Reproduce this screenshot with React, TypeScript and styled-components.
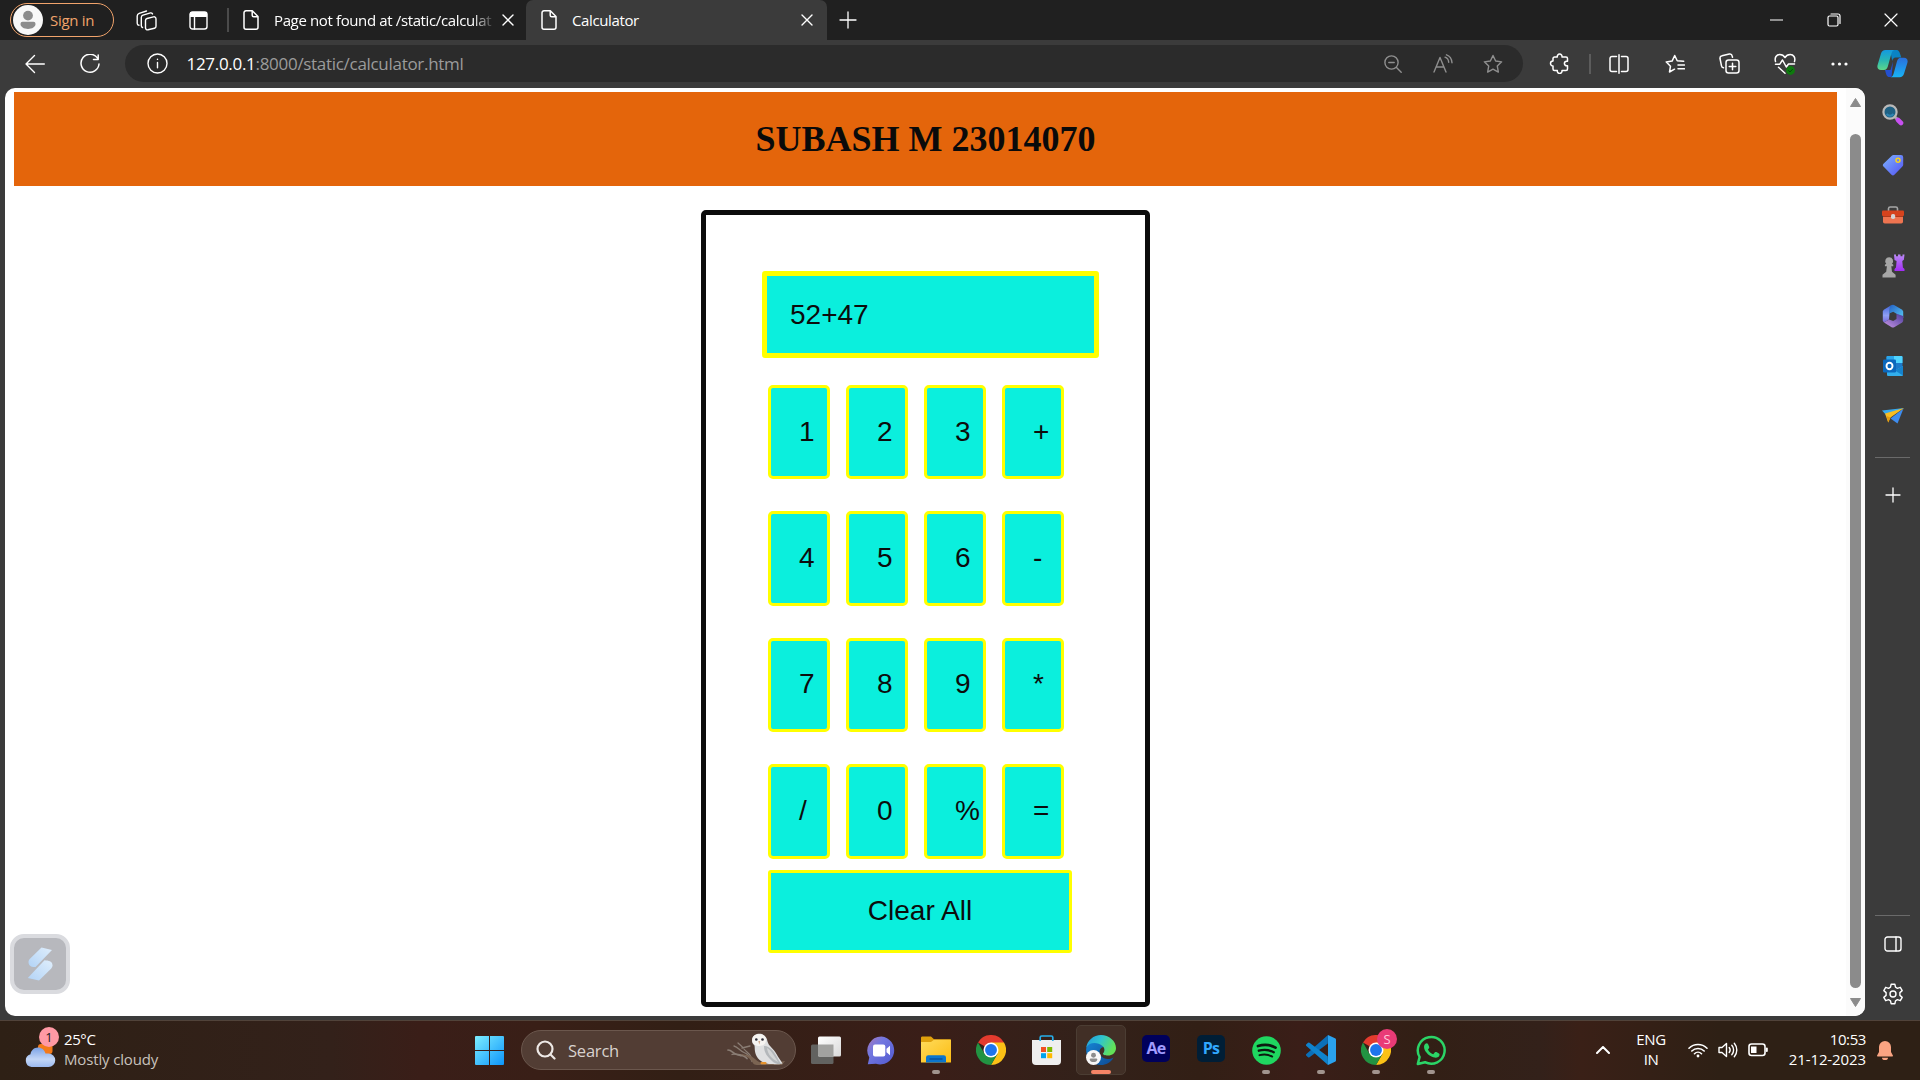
import React from 'react';
import styled, { createGlobalStyle } from 'styled-components';

const GlobalStyle = createGlobalStyle`
  * { box-sizing: border-box; }
  body { margin: 0; background: #3b3b3b; overflow: hidden; }
`;

const ui = `"Open Sans", "Noto Sans", sans-serif`;

const Desktop = styled.div`
  width: 1920px;
  height: 1080px;
  display: flex;
  flex-direction: column;
  background: #3b3b3b;
  font-family: ${ui};
  color: #fff;
`;

const Cell = styled.div<{ $w: number; $h?: number }>`
  width: ${p => p.$w}px;
  height: ${p => (p.$h ? `${p.$h}px` : '100%')};
  display: flex;
  flex: none;
  align-items: center;
  justify-content: center;
`;

const Label = styled.span<{ $size: number; $spacing?: number; $color?: string }>`
  font-size: ${p => p.$size}px;
  letter-spacing: ${p => p.$spacing ?? 0}px;
  color: ${p => p.$color ?? '#fff'};
  white-space: nowrap;
`;

/* ---------- Tab strip ---------- */

const TabStrip = styled.div`
  height: 40px;
  flex: none;
  display: flex;
  align-items: center;
  padding-left: 10px;
  background: #202020;
`;

const SignIn = styled.div`
  width: 104px;
  height: 34px;
  display: flex;
  align-items: center;
  gap: 7px;
  padding: 0 0 1px 2px;
  border: 1.5px solid #f0a36b;
  border-radius: 17px;
`;

const StripDivider = styled.div`
  width: 2px;
  height: 24px;
  margin: 0 14px 0 8px;
  background: #4b4b4b;
`;

const Tab = styled.div<{ $w: number; $active?: boolean }>`
  width: ${p => p.$w}px;
  height: 40px;
  display: flex;
  align-items: center;
  padding-left: ${p => (p.$active ? 15 : 0)}px;
  padding-right: ${p => (p.$active ? 14 : 12)}px;
  background: ${p => (p.$active ? '#3b3b3b' : 'transparent')};
  border-radius: 7px 7px 0 0;
`;

const TabTitle = styled.div<{ $fade?: boolean }>`
  flex: 1;
  min-width: 0;
  margin: 0 10px 1px 15px;
  line-height: 24px;
  font-size: 15px;
  letter-spacing: -0.37px;
  white-space: nowrap;
  ${p => p.$fade && 'mask-image: linear-gradient(90deg, #000 91%, rgba(0, 0, 0, 0.15) 100%);'}
`;

const WindowControls = styled.div`
  margin-left: auto;
  height: 40px;
  display: flex;
`;

/* ---------- Toolbar ---------- */

const Toolbar = styled.div`
  height: 48px;
  flex: none;
  display: flex;
  align-items: center;
  padding: 0 2px 1px 15px;
`;

const Omnibox = styled.div`
  width: 1398px;
  height: 37px;
  flex: none;
  display: flex;
  align-items: center;
  padding: 0 5.5px 0 22px;
  margin-right: 6px;
  background: #2b2b2b;
  border-radius: 19px;
`;

const Url = styled.div`
  flex: 1;
  margin-left: 18.5px;
  font-size: 17px;
  letter-spacing: -0.3px;
  line-height: 24px;
  color: #9b9b9b;
  b { font-weight: 400; color: #fff; }
`;

const ToolDivider = styled.div`
  width: 2px;
  height: 20px;
  background: #5c5c5c;
`;

/* ---------- Browser body ---------- */

const Body = styled.div`
  height: 932px;
  flex: none;
  display: flex;
  padding-left: 5px;
`;

const Page = styled.div`
  position: relative;
  width: 1860px;
  height: 928px;
  display: flex;
  background: #fff;
  border-radius: 10px;
  overflow: hidden;
`;

const PageContent = styled.main`
  width: 1841px;
  padding: 4px 9px 0;
`;

const Banner = styled.header`
  height: 94px;
  display: flex;
  align-items: center;
  justify-content: center;
  background: #e4650b;
  color: #0a0a0a;
  font-family: "Liberation Serif", serif;
  h1 { margin: 0; font-size: 36px; line-height: 40px; }
`;

const Scrollbar = styled.div`
  width: 19px;
  display: flex;
  flex-direction: column;
  align-items: center;
  padding: 10px 0 9px;
  background: #fbfbfb;
`;

const Thumb = styled.div`
  width: 11px;
  height: 854px;
  margin-top: 27px;
  margin-bottom: auto;
  border-radius: 6px;
  background: #8b8b8b;
`;

const Calculator = styled.section`
  width: 449px;
  height: 797px;
  margin: 24px auto 0;
  padding: 56px 0 0 56px;
  border: 5px solid #0c0c0c;
  border-radius: 5px;
  color: #0c0c0c;
  font-family: "Liberation Sans", sans-serif;
  font-size: 28px;
`;

const Display = styled.div`
  width: 337px;
  height: 87px;
  display: flex;
  align-items: center;
  padding-left: 23px;
  background: #0befdd;
  border: 5px solid #ffff00;
  border-radius: 3px;
`;

const Keys = styled.div`
  display: grid;
  grid-template-columns: repeat(4, 62px);
  grid-auto-rows: 94.4px;
  gap: 32px 16px;
  margin: 27px 0 11px 6px;
`;

const Key = styled.div`
  display: flex;
  align-items: center;
  padding: 0 0 1px 28px;
  background: #0befdd;
  border: 3px solid #ffff00;
  border-radius: 5px;
`;

const ClearKey = styled.div`
  width: 304px;
  height: 83px;
  display: flex;
  align-items: center;
  justify-content: center;
  margin-left: 6px;
  padding-bottom: 1px;
  background: #0befdd;
  border: 3px solid #ffff00;
  border-radius: 3px;
`;

const FloatingButton = styled.div`
  position: absolute;
  left: 5px;
  bottom: 22px;
  width: 60px;
  height: 60px;
  display: flex;
  align-items: center;
  justify-content: center;
  background: #b7b8bd;
  border: 4px solid #dadbdf;
  border-radius: 14px;
`;

const Sidebar = styled.aside`
  width: 55px;
  display: flex;
  flex-direction: column;
  align-items: center;
  padding: 2px 0 3px;
`;

const SideLine = styled.div`
  width: 35px;
  height: 1px;
  flex: none;
  background: #6a6a6a;
`;

const SideBottom = styled.div`
  margin-top: auto;
  display: flex;
  flex-direction: column;
  align-items: center;
`;

/* ---------- Taskbar ---------- */

const Taskbar = styled.footer`
  height: 60px;
  flex: none;
  display: flex;
  align-items: center;
  padding-bottom: 1px;
  border-top: 1px solid #51433a;
  background: linear-gradient(90deg, #2e2015 0, #33211a 330px, #3a1e18 420px, #391f17 540px, #321f15 680px, #3a1e18 930px, #33211a 1080px, #321f15 1200px, #3a1e18 1300px, #321f15 1420px, #33211a 1540px, #3a2017 1580px, #2e2015 1720px, #2e2015 100%);
`;

const Weather = styled.div`
  width: 462px;
  height: 100%;
  display: flex;
  align-items: center;
  padding-left: 24px;
  gap: 5px;
`;

const Lines = styled.div<{ $align?: string }>`
  display: flex;
  flex-direction: column;
  align-items: ${p => p.$align ?? 'flex-start'};
  padding-bottom: 2px;
  line-height: 20px;
`;

const WeatherIcon = styled.div`
  position: relative;
  width: 35px;
  height: 46px;
`;

const CloudSpot = styled.div`
  position: absolute;
  left: 0;
  bottom: 5px;
  display: flex;
`;

const Badge = styled.span<{ $x: number; $y: number; $bg: string; $fg: string }>`
  position: absolute;
  left: ${p => p.$x}px;
  top: ${p => p.$y}px;
  width: 20px;
  height: 20px;
  border-radius: 50%;
  text-align: center;
  font-size: 13px;
  line-height: 20px;
  background: ${p => p.$bg};
  color: ${p => p.$fg};
`;

const SearchBox = styled.div`
  width: 275px;
  height: 40px;
  flex: none;
  display: flex;
  align-items: center;
  margin: 0 2px 0 4px;
  padding: 0 8px 0 14px;
  background: #523d34;
  border: 1px solid #6b574d;
  border-radius: 20px;
  svg:last-child { margin-left: auto; }
`;

const TaskButton = styled.div<{ $active?: boolean }>`
  position: relative;
  width: 50px;
  height: 50px;
  flex: none;
  display: flex;
  align-items: center;
  justify-content: center;
  margin-right: 5px;
  border-radius: 5px;
  border: 1px solid ${p => (p.$active ? '#4b3d33' : 'transparent')};
  background: ${p => (p.$active ? '#412f26' : 'transparent')};
`;

const Running = styled.span<{ $active?: boolean }>`
  position: absolute;
  bottom: 0;
  left: ${p => (p.$active ? 14 : 20)}px;
  width: ${p => (p.$active ? 20 : 8)}px;
  height: 4px;
  border-radius: 2px;
  background: ${p => (p.$active ? '#f58466' : '#a1948e')};
`;

const AdobeTile = styled.div<{ $bg: string; $fg: string }>`
  width: 28px;
  height: 27px;
  margin-bottom: 3px;
  border-radius: 5px;
  text-align: center;
  font-size: 16px;
  font-weight: 700;
  letter-spacing: -0.8px;
  line-height: 26px;
  background: ${p => p.$bg};
  color: ${p => p.$fg};
`;

const Tray = styled.div`
  margin-left: auto;
  height: 100%;
  display: flex;
  align-items: center;
  padding-right: 21px;
`;

const Clock = styled.div`
  width: 93px;
  display: flex;
  flex: none;
  justify-content: flex-end;
  padding-right: 5px;
`;

/* ---------- Line icons ---------- */

type IconProps = { size?: number; w?: number; h?: number; sw?: number; color?: string; children: React.ReactNode };
const Line = ({ size = 20, w, h, sw = 1.4, color = '#fff', children }: IconProps) => (
  <svg width={w ?? size} height={h ?? size} viewBox={`0 0 ${w ?? size} ${h ?? size}`} fill="none" stroke={color} strokeWidth={sw} strokeLinecap="round" strokeLinejoin="round">
    {children}
  </svg>
);

const Cross = ({ size = 12, sw = 1.4 }) => (
  <Line size={size} sw={sw}><path d={`M1 1L${size - 1} ${size - 1}M${size - 1} 1L1 ${size - 1}`} /></Line>
);
const DocIcon = () => (
  <Line w={16} h={20} sw={1.5}><path d="M3 .8h6.3L15 6.5v10.7a2 2 0 0 1-2 2H3a2 2 0 0 1-2-2V2.8a2 2 0 0 1 2-2zM9.2 1v4.2a1.5 1.5 0 0 0 1.5 1.5h4.2" /></Line>
);
const Plus = ({ size = 18 }) => <Line size={size} sw={1.3}><path d={`M${size / 2} 1v${size - 2}M1 ${size / 2}h${size - 2}`} /></Line>;

const Person = ({ size }: { size: number }) => (
  <svg width={size} height={size} viewBox="0 0 30 30">
    <circle cx="15" cy="15" r="15" fill="#f8f8f8" />
    <circle cx="15" cy="10.6" r="4.9" fill="#8c8c8c" />
    <path d="M9.500 16.800h11a2 2 0 0 1 2 2c0 3.200-3.400 5.200-7.500 5.200s-7.500-2-7.500-5.200a2 2 0 0 1 2-2z" fill="#8c8c8c" />
  </svg>
);

const starPath = 'M10 1.500l2.650 5.500 6 .85-4.350 4.200 1.050 6L10 15.200l-5.350 2.850 1.050-6L1.350 7.850l6-.85z';

/* ---------- Colour icons ---------- */

const Copilot = () => (
  <svg width="31" height="29" viewBox="0 0 31 28">
    <defs>
      <linearGradient id="cpA" x1="0" y1="0" x2="0" y2="1"><stop offset="0" stopColor="#1499e0" /><stop offset=".5" stopColor="#27b5b5" /><stop offset="1" stopColor="#5ed889" /></linearGradient>
      <linearGradient id="cpB" x1="0" y1="0" x2="0" y2="1"><stop offset="0" stopColor="#2a6fdc" /><stop offset="1" stopColor="#18b4f6" /></linearGradient>
    </defs>
    <path d="M8 .500h11c3 0 3.500 2 4.500 5l.7 2.500h-5.500c-2 0-3 1.500-3.500 3.500L14 5z" fill="#0a83c4" />
    <path d="M8 20.500h5.500L16 12l-1.500 15.500h-2c-2.800 0-3.300-2.500-4.500-7z" fill="#2450cf" />
    <path d="M8.500.500h9c-2 .5-2.700 2-3.500 5L10.800 17c-.8 2.300-1.600 3.500-4 3.500H4c-2.800 0-4.200-2-3.400-5L4 4C4.800 1.700 6 .5 8.500.5z" fill="url(#cpA)" />
    <path d="M22.500 27.800h-9c2-.5 2.700-2 3.500-5l3-11c.8-2.300 1.600-3.500 4-3.500h3c2.800 0 4.200 2 3.400 5L27 24.300c-.8 2.300-2 3.500-4.500 3.500z" fill="url(#cpB)" />
  </svg>
);

const SideSearch = () => (
  <svg width="22" height="22" viewBox="0 0 22 22">
    <path d="M13 13l3 3" stroke="#a8a8a8" strokeWidth="3" />
    <path d="M16 16l3 3" stroke="#c750f0" strokeWidth="4.600" strokeLinecap="round" />
    <circle cx="8" cy="8" r="6.600" fill="#1f6184" stroke="#b9b9b9" strokeWidth="2.200" />
    <path d="M4.500 10a4.500 4.500 0 0 0 7 0" stroke="#2f83b0" strokeWidth="2" fill="none" />
  </svg>
);
const SideTag = () => (
  <svg width="22" height="22" viewBox="0 0 22 22">
    <defs><linearGradient id="tg" x1="0" y1="0" x2="1" y2="1"><stop offset="0" stopColor="#7cb4ff" /><stop offset="1" stopColor="#5452f2" /></linearGradient></defs>
    <path d="M11.500 1H19a2.200 2.200 0 0 1 2.200 2.200v7.600a2.500 2.500 0 0 1-.8 1.800l-8 8.200a2 2 0 0 1-2.900 0l-8-8.200a2 2 0 0 1 0-2.800l8.300-8.100A2.400 2.400 0 0 1 11.500 1z" fill="url(#tg)" />
    <circle cx="16" cy="6.300" r="2" fill="none" stroke="#f8d21c" strokeWidth="1.500" />
  </svg>
);
const SideTools = () => (
  <svg width="24" height="20" viewBox="0 0 24 20">
    <path d="M7.500 6V3.500A1.700 1.700 0 0 1 9.200 2h5.600a1.700 1.700 0 0 1 1.700 1.500V6" fill="none" stroke="#a6a6a6" strokeWidth="1.600" />
    <rect x="2" y="8" width="20" height="10.500" rx="1.800" fill="#ee7450" />
    <rect x="1" y="5.500" width="22" height="5.500" rx="1" fill="#d6431d" />
    <rect x="2" y="11" width="20" height="1" fill="#b03a1c" />
    <rect x="10" y="9" width="4.200" height="5" rx="1.800" fill="#d5d5d5" />
  </svg>
);
const SideChess = () => (
  <svg width="24" height="24" viewBox="0 0 24 24">
    <defs><linearGradient id="rk" x1="0" y1="0" x2="0" y2="1"><stop offset="0" stopColor="#b98af5" /><stop offset="1" stopColor="#a32cf5" /></linearGradient></defs>
    <path d="M13 .5h2v1.800h2V.5h2.500v1.800h2V.5h2l-.6 5.300-1.600 1.200.6 6.500 1.600 1.500v2h-10v-2l1.500-1.500.6-6.500L13.500 6z" fill="url(#rk)" />
    <path d="M8.200 3.200a3.900 3.900 0 0 1 2.800 6.600l1.300.9v1.600h-2l.7 5.500 3.600 3v2.700H1.500v-2.700l3.700-3 .7-5.500h-2v-1.600l1.400-.9a3.900 3.900 0 0 1 2.900-6.600z" fill="#a6a6a6" />
  </svg>
);
const Side365 = () => (
  <svg width="22" height="24" viewBox="0 0 22 24">
    <defs>
      <linearGradient id="m1" x1="0" y1="0" x2="0" y2="1"><stop offset="0" stopColor="#3d62d8" /><stop offset=".6" stopColor="#8fa0f4" /><stop offset="1" stopColor="#7a69d8" /></linearGradient>
      <linearGradient id="m2" x1="0" y1="0" x2="1" y2="1"><stop offset="0" stopColor="#2360c4" /><stop offset="1" stopColor="#58c9f4" /></linearGradient>
      <linearGradient id="m3" x1="0" y1="1" x2="1" y2="0"><stop offset="0" stopColor="#c996e6" /><stop offset="1" stopColor="#4a3c9c" /></linearGradient>
    </defs>
    <path d="M10 .8L8 2.800 7 15.500 2 18.500.8 17V7.200l1-1.500z" fill="url(#m1)" />
    <path d="M8 2.200Q10.500.2 12.500 1.200l7.700 4.500 1 1.700V14L14.500 9.800l-3.300-2L7.200 9.500z" fill="url(#m2)" />
    <path d="M21.200 12v5l-1 1.500-8 4.700q-1.400.6-2.600 0L2 18.500 7 15.500l4.200 1.500 3.300-2V9.800z" fill="url(#m3)" />
  </svg>
);
const SideOutlook = () => (
  <svg width="22" height="22" viewBox="0 0 22 22">
    <rect x="4.500" y="1" width="16" height="14" rx="1.200" fill="#1d79c9" />
    <path d="M12 1h7.500a1 1 0 0 1 1 1v6H12z" fill="#4fd4ff" />
    <path d="M5.500 1H12v6H4.500V2a1 1 0 0 1 1-1z" fill="#2aa5ea" />
    <path d="M5 12l8 3.500 8-4.500v9a1 1 0 0 1-1 1H6a1 1 0 0 1-1-1z" fill="#32aeec" />
    <path d="M21 11v9.500L13 15.500z" fill="#1582cc" />
    <rect x="1" y="4.500" width="13" height="13" rx="1.300" fill="#0b68bd" />
    <ellipse cx="7.500" cy="11" rx="3" ry="3.300" fill="none" stroke="#fff" strokeWidth="1.900" />
  </svg>
);
const SideSend = () => (
  <svg width="24" height="20" viewBox="0 0 24 20">
    <path d="M1 4.500L23 2 6 10z" fill="#37a9ee" />
    <path d="M22.500 2.500L16.500 17.500 9.500 12.500z" fill="#3e8df0" />
    <path d="M4 7.500L23 2 9.500 11.500 7.200 16.500z" fill="#f7bd23" />
    <path d="M5.500 10l4 1.500-2.300 5z" fill="#e29a10" />
  </svg>
);

const Swoosh = () => (
  <svg width="26" height="34" viewBox="0 0 26 34">
    <defs><linearGradient id="sw" x1="1" y1="0" x2="0" y2="1"><stop offset="0" stopColor="#dfeefc" /><stop offset="1" stopColor="#b2d3f6" /></linearGradient></defs>
    <path d="M14.500.500L25 3 8.500 20c-3.500.5-7-1-7-5 0-1.500.8-2.600 2-3.700z" fill="url(#sw)" />
    <path d="M17.500 13.300c4 .3 8 1 8 5 0 1.700-1 3-2 4L12 33.600.8 31z" fill="url(#sw)" />
  </svg>
);

const Cloud = () => (
  <svg width="32" height="27" viewBox="0 0 32 27">
    <defs><linearGradient id="cl" x1="0" y1="0" x2="0" y2="1"><stop offset="0" stopColor="#7ba2e6" /><stop offset=".6" stopColor="#c3d6f6" /><stop offset="1" stopColor="#9cbaf0" /></linearGradient></defs>
    <rect x="14" y="3" width="14.500" height="10" rx="3" fill="#f47a1a" />
    <path d="M7.500 26a6.500 6.500 0 0 1-1-12.700C7 9.300 10 6.500 14 6.500c3.500 0 6.500 2.300 7.500 6h3a6.500 6.500 0 0 1 0 13.500z" fill="url(#cl)" />
  </svg>
);

const WindowsLogo = () => (
  <svg width="29" height="29" viewBox="0 0 29 29">
    <defs><linearGradient id="wn" x1="0" y1="0" x2="1" y2="1"><stop offset="0" stopColor="#7deeff" /><stop offset="1" stopColor="#0d95fb" /></linearGradient></defs>
    <path d="M1 0h13v14H0V1a1 1 0 0 1 1-1zM15 0h13a1 1 0 0 1 1 1v13H15zM0 15h14v14H1a1 1 0 0 1-1-1zM15 15h14v13a1 1 0 0 1-1 1H15z" fill="url(#wn)" />
  </svg>
);

const Owl = () => (
  <svg width="60" height="34" viewBox="0 0 60 34">
    <g fill="none" stroke="#8a7d74" strokeLinecap="round">
      <path d="M1 17c4 0 5 4 9 4.500s7 .5 10 4" strokeWidth="1.700" />
      <path d="M5 21.500c3-1.500 6 0 9 1.500M7 13c4 1 6 5 10 6.500s6 4 8 9M11 10c2 2 4 3 6 6s5 3 7 8M15 15l8-2" strokeWidth="1.300" />
    </g>
    <path d="M14 21c6 1 10 1 14 5s8 4.500 14 4.500l16-2.500-3 4H30c-4 0-4-3-7-6s-6-2.500-9-5z" fill="#7b6452" />
    <path d="M25 7.500C25 3 28.500.8 32.300.8 37 .8 40 4 40.500 8.500 41.500 13 47 16 49.500 21c1.800 3.500 4 6 6 9.500-4 1-7 1-9.500.5-7 .5-13.500-2-16.500-8-2.200-4.500-1.500-8-2-10.500-1.700-1.500-2.500-3-2.500-5z" fill="#dfe0e1" />
    <path d="M37 13c6-.5 11 7 13 11s3 5 4.500 7c-4 .5-7-.5-10-3.500-4-4-7.500-7.500-7.500-14.500z" fill="#b4b8bb" />
    <path d="M40 15c4 2 8 9 11 14-6-3-10-7-11-14z" fill="#d3d5d6" />
    <path d="M25.300 7c0-4 3.200-5.700 6.700-5.700S39 3 39 7s-3 6-6.500 6-7.200-2-7.200-6z" fill="#f6f4f1" />
    <circle cx="29.300" cy="6.500" r="1.300" fill="#2c2c38" /><circle cx="35.500" cy="6.500" r="1.300" fill="#2c2c38" />
    <path d="M31.300 8l1 3.500 1-3.500z" fill="#d1a88a" />
    <rect x="33.500" y="29" width="6" height="2.200" rx="1" fill="#e6932e" />
  </svg>
);

const TaskView = () => (
  <svg width="30" height="29" viewBox="0 0 30 29">
    <defs><linearGradient id="tv" x1="0" y1="0" x2="1" y2="1"><stop offset="0" stopColor="#fff" /><stop offset="1" stopColor="#d9d9d9" /></linearGradient></defs>
    <rect y="8.500" width="22.500" height="19.500" rx="1.500" fill="#626260" />
    <rect x="7" y=".5" width="23" height="20" rx="1.500" fill="url(#tv)" />
    <path d="M7 8.500h15.500v12H8.500A1.500 1.500 0 0 1 7 19z" fill="#a2a2a0" />
  </svg>
);
const Chat = () => (
  <svg width="29" height="29" viewBox="0 0 29 29">
    <defs><linearGradient id="ch" x1="0" y1="0" x2="1" y2="1"><stop offset="0" stopColor="#a878b8" /><stop offset=".35" stopColor="#7277e0" /><stop offset="1" stopColor="#5159cf" /></linearGradient></defs>
    <path d="M14.500.500A14 14 0 1 1 9 27.800L.8 28.300l1.500-6.700A14 14 0 0 1 14.500.500z" fill="url(#ch)" />
    <rect x="6" y="8.500" width="12.300" height="12" rx="2" fill="#fff" />
    <path d="M19.500 12.800l3.500-3v9.400l-3.500-3z" fill="#fff" />
  </svg>
);
const Explorer = () => (
  <svg width="30" height="28" viewBox="0 0 30 28">
    <defs><linearGradient id="fx" x1="0" y1="0" x2="1" y2="1"><stop offset="0" stopColor="#ffdb5b" /><stop offset="1" stopColor="#fcbc12" /></linearGradient></defs>
    <path d="M0 1.500A1.300 1.300 0 0 1 1.300.500H10l3 2.800h16a1 1 0 0 1 1 1V10H0z" fill="#dfa00c" />
    <path d="M0 6h10l3-2.200h17V26.500H0z" fill="url(#fx)" />
    <path d="M5 21.500a2.300 2.300 0 0 1 2.300-2.300h15.400a2.300 2.300 0 0 1 2.300 2.300v5H5z" fill="#0b75cd" />
    <path d="M8.500 23h13" stroke="#07519c" strokeWidth="1.500" />
  </svg>
);
const Chrome = () => (
  <svg width="30" height="30" viewBox="0 0 48 48">
    <path d="M24 24L3.200 12A24 24 0 0 1 44.800 12z" fill="#e33b2e" />
    <path d="M24 12H44.800A24 24 0 0 1 24 48L34.400 30z" fill="#fbc116" />
    <path d="M3.200 12L13.600 30 24 36 34.400 30 24 48A24 24 0 0 1 3.200 12z" fill="#229342" />
    <circle cx="24" cy="24" r="12" fill="#fff" />
    <circle cx="24" cy="24" r="9.500" fill="#1f75ec" />
  </svg>
);
const Store = () => (
  <svg width="29" height="30" viewBox="0 0 29 30">
    <path d="M0 5h29v21a4 4 0 0 1-4 4H4a4 4 0 0 1-4-4z" fill="#efefef" />
    <path d="M8.200 6V2.500a1.500 1.500 0 0 1 1.500-1.500h9.600a1.500 1.500 0 0 1 1.500 1.500V6" fill="none" stroke="#26aeea" strokeWidth="1.700" />
    <path d="M9 12h5v5H9z" fill="#f25022" /><path d="M15.200 12h5v5h-5z" fill="#7fba00" />
    <path d="M9 18.200h5v5H9z" fill="#00a4ef" /><path d="M15.200 18.200h5v5h-5z" fill="#ffb900" />
  </svg>
);
const Edge = () => (
  <svg width="30" height="30" viewBox="0 0 30 30">
    <defs>
      <linearGradient id="eg" x1="0" y1="0" x2="1" y2=".4"><stop offset="0" stopColor="#2199dd" /><stop offset=".5" stopColor="#2fc4cf" /><stop offset="1" stopColor="#62e258" /></linearGradient>
      <linearGradient id="eb" x1="0" y1="0" x2="1" y2="1"><stop offset="0" stopColor="#1687d6" /><stop offset="1" stopColor="#0e4a94" /></linearGradient>
    </defs>
    <path d="M.2 14C1 6 6.500 3 13 7l5 5c-4 0-6 5-3 9 3 3.500 8 4 12.500 1.500C24.500 28 20 30 15 30 6.500 30-.5 23 .2 14z" fill="url(#eb)" />
    <path d="M.3 12.500C1.200 5.500 7.500 0 15 0c8 0 15 6 15 13 0 5-4 7.500-8 7.500-3 0-5.500-1-5-2 2-2 2-5.500-.5-7.500C12 7 3.500 6.500.3 12.500z" fill="url(#eg)" />
  </svg>
);
const EdgePerson = styled.span`
  position: absolute;
  left: 9px;
  bottom: 9px;
  width: 15px;
  height: 15px;
  display: flex;
`;
const Spotify = () => (
  <svg width="29" height="29" viewBox="0 0 29 29">
    <circle cx="14.500" cy="14.500" r="14.300" fill="#1fd760" />
    <g fill="none" stroke="#0c1a10" strokeLinecap="round">
      <path d="M6 10c6-1.800 12.500-1.200 17.500 1.600" strokeWidth="2.800" />
      <path d="M6.800 14.700c5.200-1.500 10.500-.9 15 1.600" strokeWidth="2.300" />
      <path d="M7.500 19.200c4.500-1.200 9-.7 12.700 1.400" strokeWidth="1.900" />
    </g>
  </svg>
);
const VSCode = () => (
  <svg width="30" height="30" viewBox="0 0 30 30">
    <path d="M22 0l-.2 8.500L3.500 22.200a1.200 1.200 0 0 1-1.500 0L.4 20.700a1.200 1.200 0 0 1 0-1.800z" fill="#0b6fb8" />
    <path d="M22 30l-.2-8.500L3.500 7.800a1.200 1.200 0 0 0-1.500 0L.4 9.300a1.200 1.200 0 0 0 0 1.800z" fill="#0f83cd" />
    <path d="M22 0l7 3.300a1.500 1.500 0 0 1 1 1.500v20.400a1.500 1.500 0 0 1-1 1.500L22 30z" fill="#2aa2ee" />
  </svg>
);
const WhatsApp = () => (
  <svg width="30" height="31" viewBox="0 0 30 31">
    <path d="M1.800 29l1.800-7A13.400 13.400 0 1 1 9 27.200z" fill="none" stroke="#2bd467" strokeWidth="2.500" strokeLinejoin="round" />
    <path d="M8.300 10.200c.8-2 2.900-2.700 3.700-1.200l1.200 2.800c.3.800-.2 1.500-1.300 2.700 1.300 2.400 3 3.900 5.300 4.800l1.500-1.900c.5-.6 1.100-.6 1.700-.3l2.600 1.300c1.300.8.3 2.900-.9 3.700-2 1.200-4.600.5-7.500-1-3.500-2-7.700-7-6.300-10.900z" fill="#2bd467" />
  </svg>
);

/* ---------- Screen ---------- */

const keys = ['1', '2', '3', '+', '4', '5', '6', '-', '7', '8', '9', '*', '/', '0', '%', '='];
const sideApps = [SideSearch, SideTag, SideTools, SideChess, Side365, SideOutlook, SideSend];

export default function App() {
  return (
    <Desktop>
      <GlobalStyle />
      <TabStrip>
        <SignIn>
          <Person size={30} />
          <Label $size={15} $spacing={-0.3} $color="#f0a36b">Sign in</Label>
        </SignIn>
        <Cell $w={64}>
          <Line size={21} sw={1.4}>
            <path d="M11 8.500l6.500-1.600a2 2 0 0 1 2.500 2v7.300a2 2 0 0 1-1.500 2L12 19.800a2 2 0 0 1-2.500-2v-7.300a2 2 0 0 1 1.500-2z" />
            <path d="M6.500 17.500a2 2 0 0 1-1.200-1.700V7.500A2.500 2.500 0 0 1 7 5.200l7.500-2.300a2 2 0 0 1 2 1M3 15.200a2 2 0 0 1-1.800-2V6a3 3 0 0 1 2-2.700L10.500 1" />
          </Line>
        </Cell>
        <Cell $w={41}>
          <Line size={19}><rect x="1" y="1" width="17" height="17" rx="2.500" /><path d="M1.800 3.500h15.400M2 2h15M1.800 5h15.400" strokeWidth="2" /><path d="M5.500 5v13" /></Line>
        </Cell>
        <StripDivider />
        <Tab $w={283}>
          <DocIcon />
          <TabTitle $fade>Page not found at /static/calculat</TabTitle>
          <Cross />
        </Tab>
        <Tab $w={301} $active>
          <DocIcon />
          <TabTitle>Calculator</TabTitle>
          <Cross />
        </Tab>
        <Cell $w={42}><Plus /></Cell>
        <WindowControls>
          <Cell $w={57}><Line w={13} h={2} sw={1.2}><path d="M0 1h13" /></Line></Cell>
          <Cell $w={57}><Line size={14} sw={1.2}><rect x="1" y="3" width="10" height="10" rx="1.500" /><path d="M4 1h7a2 2 0 0 1 2 2v7.500" /></Line></Cell>
          <Cell $w={58}><Cross size={14} sw={1.2} /></Cell>
        </WindowControls>
      </TabStrip>

      <Toolbar>
        <Cell $w={40}><Line size={20} sw={1.4}><path d="M19.300 10H1M9.500 1.500L1 10l8.500 8.500" /></Line></Cell>
        <Cell $w={70}><Line size={20} sw={1.5}><path d="M17.500 4.200A9 9 0 1 0 19 10M18.200 1v4.600h-4.700" /></Line></Cell>
        <Omnibox>
          <Line size={21} sw={1.4}><circle cx="10.500" cy="10.500" r="9.500" /><path d="M10.500 9.500v5.300M10.500 6.200v.2" /></Line>
          <Url><b>127.0.0.1</b>:8000/static/calculator.html</Url>
          <Cell $w={50}><Line size={18} color="#8f8f8f"><circle cx="7.500" cy="7.500" r="6.600" /><path d="M12.500 12.500l4.700 4.700M4.800 7.500h5.400" /></Line></Cell>
          <Cell $w={50}><Line size={20} color="#8f8f8f"><path d="M1 18L7 3.500 13 18M3.200 13h7.600M12 3.200c2.300.8 3.500 2.700 3.700 5M13.500.8c3.200 1 5.200 3.800 5.500 8" /></Line></Cell>
          <Cell $w={50}><Line w={20} h={20} color="#8f8f8f"><path d={starPath} /></Line></Cell>
        </Omnibox>
        <Cell $w={60}>
          <Line size={21} sw={1.5}><path d="M5.500 4h2.800a2.400 2.400 0 1 1 4.700 0H17a1.500 1.500 0 0 1 1.500 1.500v2.700h-.8a2.300 2.300 0 0 0 0 4.600h.8v3.200a1.500 1.500 0 0 1-1.500 1.500h-4a2.400 2.400 0 1 1-4.700 0H5.500A1.500 1.500 0 0 1 4 16v-3a2.500 2.500 0 1 1 0-5V5.500A1.500 1.500 0 0 1 5.500 4z" /></Line>
        </Cell>
        <ToolDivider />
        <Cell $w={56}><Line size={20} sw={1.5}><path d="M7.500 2.500H3a2 2 0 0 0-2 2v11a2 2 0 0 0 2 2h4.500M12.500 2.500H17a2 2 0 0 1 2 2v11a2 2 0 0 1-2 2h-4.500M10 .800v18.400" /></Line></Cell>
        <Cell $w={55}><Line size={20} sw={1.5}><path d="M9.500 15.200L4.500 18l1-5.800-4.200-4.300 5.800-.8L9.700 1.500l2.500 5.200 6.500.6M13 11h6.500M13 14.800h6.500" /></Line></Cell>
        <Cell $w={55}><Line size={21} sw={1.5}><rect x="7" y="7" width="13" height="13" rx="2.500" /><path d="M13.500 10.200v6.600M10.200 13.500h6.600M4.500 14.800a2.500 2.500 0 0 1-2-2L1 5.500a2.500 2.500 0 0 1 2-2.800L10.300 1a2.500 2.500 0 0 1 2.900 2l.3 1.200" /></Line></Cell>
        <Cell $w={55}>
          <Line w={22} h={22} sw={1.5}>
            <path d="M1.500 8.500C.3 4.500 2.500 1.500 5.800 1.500c2.300 0 4 1 5.200 3 1.200-2 2.900-3 5.200-3 3.300 0 5.500 3 4.300 7M1.500 11.200h4.300L8.500 7l3.800 7 2.200-3h6M4.500 14.200l6.500 6" />
            <circle cx="16.500" cy="17.500" r="4.400" fill="#0e7a0d" stroke="none" /><path d="M14.600 17.600l1.400 1.400 2.500-2.700" stroke="#06480a" strokeWidth="1" />
          </Line>
        </Cell>
        <Cell $w={55}><svg width="17" height="4"><circle cx="2" cy="2" r="1.600" fill="#fff" /><circle cx="8.500" cy="2" r="1.600" fill="#fff" /><circle cx="15" cy="2" r="1.600" fill="#fff" /></svg></Cell>
        <Cell $w={51}><Copilot /></Cell>
      </Toolbar>

      <Body>
        <Page>
          <PageContent>
            <Banner><h1>SUBASH M 23014070</h1></Banner>
            <Calculator>
              <Display>52+47</Display>
              <Keys>{keys.map(k => <Key key={k}>{k}</Key>)}</Keys>
              <ClearKey>Clear All</ClearKey>
            </Calculator>
          </PageContent>
          <Scrollbar>
            <svg width="11" height="9"><path d="M5.500.500L10.500 8.500H.500z" fill="#8b8b8b" stroke="#8b8b8b" strokeLinejoin="round" /></svg>
            <Thumb />
            <svg width="11" height="9"><path d="M.500.500h10L5.500 8.500z" fill="#8b8b8b" stroke="#8b8b8b" strokeLinejoin="round" /></svg>
          </Scrollbar>
          <FloatingButton><Swoosh /></FloatingButton>
        </Page>
        <Sidebar>
          {sideApps.map((Icon, i) => <Cell key={i} $w={54} $h={50.2}><Icon /></Cell>)}
          <Cell $w={54} $h={31.6}><SideLine /></Cell>
          <Cell $w={54} $h={45}><Plus size={16} /></Cell>
          <SideBottom>
            <SideLine />
            <Cell $w={54} $h={55}><Line w={18} h={16}><rect x="1" y="1" width="16" height="14" rx="2.500" /><path d="M12 1v14" /></Line></Cell>
            <Cell $w={54} $h={46}>
              <Line size={22} sw={1.4}>
                <path d="M9.100 1.300h3.800l.6 2.900 1.900 1.100 2.900-1 1.900 3.300-2.300 2v2.800l2.300 2-1.900 3.300-2.900-1-1.900 1.100-.6 2.900H9.100l-.6-2.900-1.900-1.100-2.900 1-1.900-3.300 2.300-2V9.600l-2.300-2 1.900-3.300 2.900 1 1.900-1.100z" />
                <circle cx="11" cy="11" r="3" />
              </Line>
            </Cell>
          </SideBottom>
        </Sidebar>
      </Body>

      <Taskbar>
        <Weather>
          <WeatherIcon><CloudSpot><Cloud /></CloudSpot><Badge $x={15} $y={0} $bg="#ff99a4" $fg="#1a1a1a">1</Badge></WeatherIcon>
          <Lines>
            <Label $size={15} $spacing={-0.4}>25°C</Label>
            <Label $size={15} $spacing={-0.15} $color="#c8c2bd">Mostly cloudy</Label>
          </Lines>
        </Weather>
        <Cell $w={55}><WindowsLogo /></Cell>
        <SearchBox>
          <Line size={20} sw={2.200} color="#eee9e6"><circle cx="9" cy="9" r="7.500" /><path d="M14.500 14.500l4 4" /></Line>
          <Cell $w={75}><Label $size={16.500} $spacing={-0.2} $color="#d9d2ce">Search</Label></Cell>
          <Owl />
        </SearchBox>
        <Cell $w={3} />
        <TaskButton><TaskView /></TaskButton>
        <TaskButton><Chat /></TaskButton>
        <TaskButton><Explorer /><Running /></TaskButton>
        <TaskButton><Chrome /></TaskButton>
        <TaskButton><Store /></TaskButton>
        <TaskButton $active><Edge /><EdgePerson><Person size={15} /></EdgePerson><Running $active /></TaskButton>
        <TaskButton><AdobeTile $bg="#00005b" $fg="#a19bff">Ae</AdobeTile></TaskButton>
        <TaskButton><AdobeTile $bg="#001e36" $fg="#31a8ff">Ps</AdobeTile></TaskButton>
        <TaskButton><Spotify /><Running /></TaskButton>
        <TaskButton><VSCode /><Running /></TaskButton>
        <TaskButton><Chrome /><Badge $x={25} $y={3} $bg="#e93b77" $fg="#ffc9dc">S</Badge><Running /></TaskButton>
        <TaskButton><WhatsApp /><Running /></TaskButton>
        <Tray>
          <Cell $w={42}><Line w={14} h={8} sw={2}><path d="M1 7l6-6 6 6" /></Line></Cell>
          <Cell $w={54}>
            <Lines $align="center"><Label $size={15} $spacing={-0.4}>ENG</Label><Label $size={15} $spacing={-0.4}>IN</Label></Lines>
          </Cell>
          <Cell $w={40}>
            <Line w={20} h={15} sw={1.6}><path d="M1 5.200a12.800 12.800 0 0 1 18 0M3.800 8a8.800 8.800 0 0 1 12.400 0M6.500 10.700a5 5 0 0 1 7 0" /><circle cx="10" cy="13" r="1.400" fill="#fff" stroke="none" /></Line>
          </Cell>
          <Cell $w={20}><Line w={20} h={16} sw={1.400}><path d="M1 5.500h3L8.500 1.500v13L4 10.500H1zM11.200 5.500a4 4 0 0 1 0 5M13.800 3.300a7 7 0 0 1 0 9.400M16.300 1.200a10.500 10.500 0 0 1 0 13.600" /></Line></Cell>
          <Cell $w={40}>
            <Line w={20} h={14} sw={1.6}><rect x="1" y="1" width="16" height="11.500" rx="2.500" /><rect x="3" y="3.500" width="5.500" height="6.500" fill="#fff" stroke="none" /><path d="M18.800 5.500v2.500" strokeWidth="2" /></Line>
          </Cell>
          <Clock>
            <Lines $align="flex-end"><Label $size={15} $spacing={-0.4}>10:53</Label><Label $size={15} $spacing={-0.1}>21-12-2023</Label></Lines>
          </Clock>
          <Cell $w={28}>
            <svg width="16" height="19" viewBox="0 0 16 19"><path d="M8 0a6 6 0 0 1 6 6v5l1.900 3.500c.3.600 0 1-.6 1H.7c-.6 0-.9-.4-.6-1L2 11V6a6 6 0 0 1 6-6zM5 16.700h6a3 2.300 0 0 1-6 0z" fill="#faa482" /></svg>
          </Cell>
        </Tray>
      </Taskbar>
    </Desktop>
  );
}
